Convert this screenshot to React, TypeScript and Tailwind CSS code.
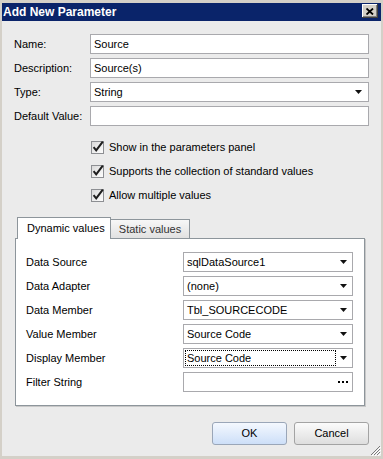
import React from "react";

const Arrow = () => (
  <svg width="7" height="4" viewBox="0 0 7 4" className="shrink-0">
    <polygon points="0,0 7,0 3.5,4" fill="#111" />
  </svg>
);

const TextBox = ({ value }: { value: string }) => (
  <div className="flex-1 h-[20px] bg-white border border-[#a9a9ad] flex items-center pl-[3px]">
    <span>{value}</span>
  </div>
);

const Combo = ({ value, arrowPad }: { value: string; arrowPad: string }) => (
  <div className={`flex-1 h-[20px] bg-white border border-[#a9a9ad] flex items-center pl-[3px] ${arrowPad}`}>
    <span className="flex-1">{value}</span>
    <Arrow />
  </div>
);

const Check = ({ label }: { label: string }) => (
  <div className="h-[24px] flex items-center gap-[4px]">
    <svg width="14" height="14" viewBox="0 0 14 14" className="shrink-0">
      <defs>
        <linearGradient id="cbg" x1="0" y1="0" x2="1" y2="1">
          <stop offset="0" stopColor="#d8d8d8" />
          <stop offset="1" stopColor="#ffffff" />
        </linearGradient>
      </defs>
      <rect x="0.5" y="1.5" width="12" height="12" fill="url(#cbg)" stroke="#8d8f93" />
      <path d="M2.6 7.2 L5.2 10.4 L11.8 1.6" fill="none" stroke="#1d1d1d" strokeWidth="2" />
    </svg>
    <span>{label}</span>
  </div>
);

const PanelRow = ({ label, children }: { label: string; children: React.ReactNode }) => (
  <div className="flex items-center h-[20px]">
    <span className="w-[157px] shrink-0">{label}</span>
    {children}
  </div>
);

export default function App() {
  return (
    <div className="w-[383px] h-[459px] bg-[#d4d0c8] pt-[3px] px-[2px] pb-[3px] flex flex-col font-['Liberation_Sans',Arial,sans-serif] text-[11px] text-black leading-none">
      {/* Title bar */}
      <div className="h-[18px] bg-[#0a246a] flex items-start justify-between pl-[1px] pr-[3px] pt-[1px] shrink-0">
        <span className="text-white font-bold text-[12px] leading-[16px]">Add New Parameter</span>
        <div className="w-[16px] h-[14px] bg-[#d4d0c8] flex items-center justify-center shadow-[inset_-1px_-1px_#404040,inset_1px_1px_#ffffff,inset_-2px_-2px_#808080]">
          <svg width="8" height="7" viewBox="0 0 8 7">
            <path d="M0.5 0.5 L7 6.5 M7 0.5 L0.5 6.5" stroke="#000" strokeWidth="1.8" />
          </svg>
        </div>
      </div>

      {/* Body */}
      <div className="flex-1 bg-[#ebebeb] relative flex flex-col">
        <div className="px-[12px] pt-[13px] flex flex-col gap-[4px]">
          <div className="flex items-center">
            <span className="w-[76px] shrink-0">Name:</span>
            <TextBox value="Source" />
          </div>
          <div className="flex items-center">
            <span className="w-[76px] shrink-0">Description:</span>
            <TextBox value="Source(s)" />
          </div>
          <div className="flex items-center">
            <span className="w-[76px] shrink-0">Type:</span>
            <Combo value="String" arrowPad="pr-[6px]" />
          </div>
          <div className="flex items-center">
            <span className="w-[76px] shrink-0">Default Value:</span>
            <TextBox value="" />
          </div>
        </div>

        <div className="pl-[89px] mt-[9px] flex flex-col">
          <Check label="Show in the parameters panel" />
          <Check label="Supports the collection of standard values" />
          <Check label="Allow multiple values" />
        </div>

        {/* Tabs */}
        <div className="ml-[13px] mr-[16px] mt-[10px] flex flex-col">
          <div className="h-[21px] flex items-end pl-[2px]">
            <div className="relative z-10 h-[22px] -mb-[1px] w-[94px] bg-white border border-b-0 border-[#8d959b] flex items-center pl-[9px]">
              <span>Dynamic values</span>
            </div>
            <div className="h-[19px] w-[79px] bg-gradient-to-b from-[#f7f7f7] to-[#e1e1e1] border border-l-0 border-b-0 border-[#8d959b] flex items-center justify-center text-[#333]">
              <span>Static values</span>
            </div>
          </div>
          <div className="h-[168px] bg-white border border-[#8d959b] shadow-[1px_1px_0_#c8c8c8] pt-[13px] pl-[10px] pr-[11px] flex flex-col gap-[4px]">
            <PanelRow label="Data Source">
              <Combo value="sqlDataSource1" arrowPad="pr-[5px]" />
            </PanelRow>
            <PanelRow label="Data Adapter">
              <Combo value="(none)" arrowPad="pr-[5px]" />
            </PanelRow>
            <PanelRow label="Data Member">
              <Combo value="Tbl_SOURCECODE" arrowPad="pr-[5px]" />
            </PanelRow>
            <PanelRow label="Value Member">
              <Combo value="Source Code" arrowPad="pr-[5px]" />
            </PanelRow>
            <PanelRow label="Display Member">
              <div className="flex-1 h-[20px] bg-white border border-[#a9a9ad] flex items-center p-[1px] pr-[5px]">
                <div className="w-[151px] h-full border border-dotted border-black flex items-center pl-[1px]">
                  <span>Source Code</span>
                </div>
                <div className="flex-1" />
                <Arrow />
              </div>
            </PanelRow>
            <PanelRow label="Filter String">
              <div className="flex-1 h-[20px] bg-white border border-[#a9a9ad] flex items-center justify-end pr-[4px] gap-[2px]">
                <span className="w-[2px] h-[2px] bg-black" />
                <span className="w-[2px] h-[2px] bg-black" />
                <span className="w-[2px] h-[2px] bg-black" />
              </div>
            </PanelRow>
          </div>
        </div>

        {/* Buttons */}
        <div className="mt-[16px] pr-[12px] flex justify-end gap-[7px]">
          <button className="w-[75px] h-[23px] rounded-[3px] border border-[#9aa6b8] bg-gradient-to-b from-[#f4f8fe] to-[#cddff8] text-[11px] text-black">
            OK
          </button>
          <button className="w-[75px] h-[23px] rounded-[3px] border border-[#a3a3a3] bg-gradient-to-b from-[#fbfbfb] to-[#dedede] text-[11px] text-black">
            Cancel
          </button>
        </div>

        {/* Resize grip */}
        <svg width="12" height="12" viewBox="0 0 12 12" className="absolute right-0 bottom-0">
          <path d="M11 2 L2 11 M11 5 L5 11 M11 8 L8 11" stroke="#7a7a7a" strokeWidth="1" />
          <path d="M12 3 L3 12 M12 6 L6 12 M12 9 L9 12" stroke="#ffffff" strokeWidth="1" />
        </svg>
      </div>
    </div>
  );
}
